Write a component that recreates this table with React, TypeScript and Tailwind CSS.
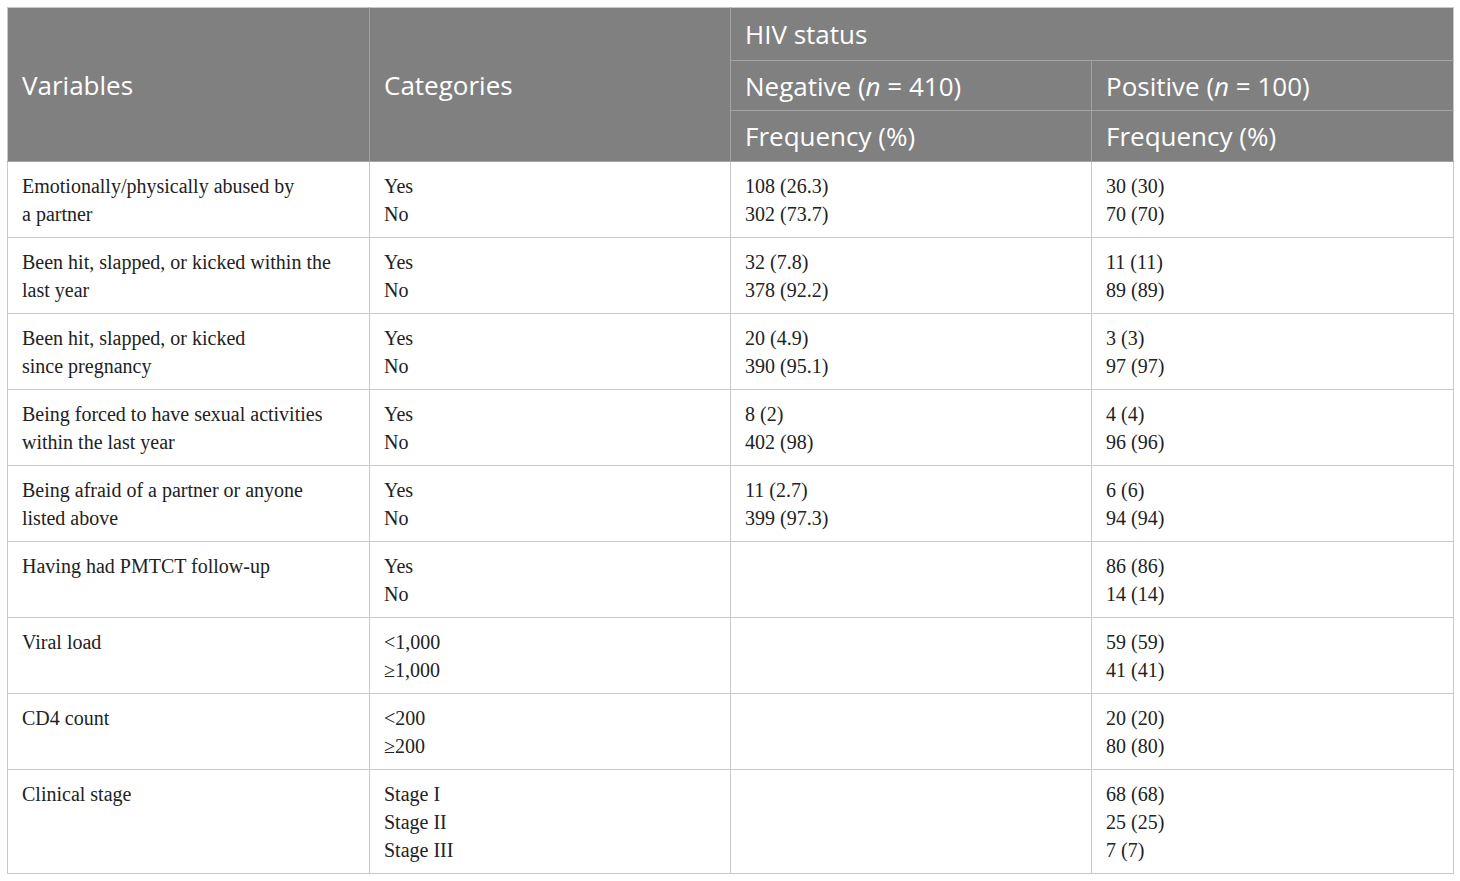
import React from "react";

const rows: { v: string[]; c: string[]; neg: string[]; pos: string[] }[] = [
  { v: ["Emotionally/physically abused by", "a partner"], c: ["Yes", "No"], neg: ["108 (26.3)", "302 (73.7)"], pos: ["30 (30)", "70 (70)"] },
  { v: ["Been hit, slapped, or kicked within the", "last year"], c: ["Yes", "No"], neg: ["32 (7.8)", "378 (92.2)"], pos: ["11 (11)", "89 (89)"] },
  { v: ["Been hit, slapped, or kicked", "since pregnancy"], c: ["Yes", "No"], neg: ["20 (4.9)", "390 (95.1)"], pos: ["3 (3)", "97 (97)"] },
  { v: ["Being forced to have sexual activities", "within the last year"], c: ["Yes", "No"], neg: ["8 (2)", "402 (98)"], pos: ["4 (4)", "96 (96)"] },
  { v: ["Being afraid of a partner or anyone", "listed above"], c: ["Yes", "No"], neg: ["11 (2.7)", "399 (97.3)"], pos: ["6 (6)", "94 (94)"] },
  { v: ["Having had PMTCT follow-up"], c: ["Yes", "No"], neg: [], pos: ["86 (86)", "14 (14)"] },
  { v: ["Viral load"], c: ["<1,000", "≥1,000"], neg: [], pos: ["59 (59)", "41 (41)"] },
  { v: ["CD4 count"], c: ["<200", "≥200"], neg: [], pos: ["20 (20)", "80 (80)"] },
  { v: ["Clinical stage"], c: ["Stage I", "Stage II", "Stage III"], neg: [], pos: ["68 (68)", "25 (25)", "7 (7)"] },
];

const Lines = ({ items }: { items: string[] }) => (
  <>
    {items.map((t, i) => (
      <div key={i}>{t}</div>
    ))}
  </>
);

export default function App() {
  const hd = "border border-[#a3a3a3] px-[14px] text-left align-middle font-normal";
  const bd = "border border-[#c9c9c9] px-[14px] pt-[10px] pb-[9px] align-top";
  return (
    <div className="bg-white w-[1460px] h-[881px] pt-[7px] pl-[7px]">
      <table className="border-collapse w-[1446px] table-fixed">
        <colgroup>
          <col className="w-[362px]" />
          <col className="w-[361px]" />
          <col className="w-[361px]" />
          <col className="w-[362px]" />
        </colgroup>
        <thead className="bg-[#7f807f] text-white text-[26px] leading-[30px]" style={{ fontFamily: '"Open Sans", sans-serif' }}>
          <tr className="h-[53px]">
            <th rowSpan={3} className={hd + " border-l-[#c9c9c9] border-t-[#c9c9c9]"}>Variables</th>
            <th rowSpan={3} className={hd + " border-t-[#c9c9c9]"}>Categories</th>
            <th colSpan={2} className={hd + " border-t-[#c9c9c9] border-r-[#c9c9c9]"}>HIV status</th>
          </tr>
          <tr className="h-[50px]">
            <th className={hd}>
              Negative (<i>n</i> = 410)
            </th>
            <th className={hd + " border-r-[#c9c9c9]"}>
              Positive (<i>n</i> = 100)
            </th>
          </tr>
          <tr className="h-[51px]">
            <th className={hd}>Frequency (%)</th>
            <th className={hd + " border-r-[#c9c9c9]"}>Frequency (%)</th>
          </tr>
        </thead>
        <tbody className="text-[#222] text-[20px] leading-[28px]" style={{ fontFamily: '"Liberation Serif", serif' }}>
          {rows.map((r, i) => (
            <tr key={i}>
              <td className={bd}><Lines items={r.v} /></td>
              <td className={bd}><Lines items={r.c} /></td>
              <td className={bd}><Lines items={r.neg} /></td>
              <td className={bd}><Lines items={r.pos} /></td>
            </tr>
          ))}
        </tbody>
      </table>
    </div>
  );
}
